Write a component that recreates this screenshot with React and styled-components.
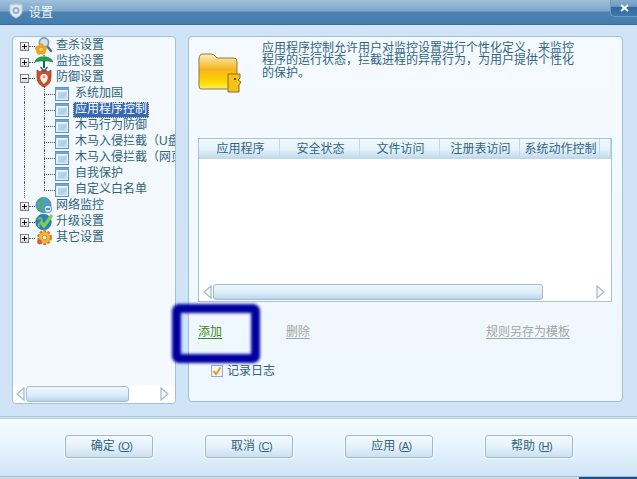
import React from "react";
import styled, { createGlobalStyle } from "styled-components";

const Global = createGlobalStyle`
  html, body { margin: 0; padding: 0; background: #cfe5f7; }
  body { font-family: "Liberation Sans", "Noto Sans CJK SC", sans-serif; font-size: 12px; color: #2f6379; }
`;

const Page = styled.div`
  position: relative;
  width: 637px;
  height: 479px;
  overflow: hidden;
  display: flex;
  flex-direction: column;
  background: #cfe5f7;
`;
const TitleBar = styled.header`
  flex: none;
  display: flex;
  align-items: center;
  gap: 5px;
  padding: 0 0 2px 8px;
  box-sizing: content-box;
  height: 22px;
  color: #f2f8fc;
  border-bottom: 1px solid #3c6d98;
  background: linear-gradient(#9fc1da 0, #7ea8cb 11px, #4d83b2 12px, #447dad 24px);
`;
const TitleText = styled.span`
  font-size: 12px;
  flex: 1;
`;
const CloseBtn = styled.button`
  width: 27px;
  height: 17px;
  align-self: flex-start;
  border: 1px solid #6f9cc0;
  border-top: 0;
  border-right: 0;
  border-radius: 0 0 0 5px;
  padding: 0;
  display: flex;
  align-items: center;
  justify-content: center;
  background: linear-gradient(#86adcc 0, #6f9abf 40%, #2f6a9e 45%, #3f78aa 100%);
`;
const Main = styled.main`
  flex: none;
  height: 392px;
  display: flex;
  gap: 12px;
  padding: 11px 14px 0 12px;
  box-sizing: border-box;
  border-bottom: 1px solid #a8c8dd;
`;
const TreePanel = styled.nav`
  width: 164px;
  height: 368px;
  box-sizing: border-box;
  border: 1px solid #a4c0d4;
  border-radius: 4px;
  background: #f3f9fe;
  display: flex;
  flex-direction: column;
  overflow: hidden;
`;
const TreeList = styled.div`
  flex: 1;
  overflow: hidden;
  padding-top: 1px;
`;
const Row = styled.div`
  position: relative;
  height: 16px;
  display: flex;
  align-items: center;
  white-space: nowrap;
  padding-left: ${(p) => (p.$child ? 31 : 7)}px;
  ${(p) =>
    p.$rail &&
    `&::before{content:"";position:absolute;left:11px;top:0;height:16px;border-left:1px dotted #555;}`}
  ${(p) =>
    p.$child &&
    `&::after{content:"";position:absolute;left:31px;top:0;height:${p.$last ? 8 : 16}px;border-left:1px dotted #555;}`}
`;
const Expander = styled.span`
  width: 9px;
  height: 9px;
  flex: none;
  box-sizing: border-box;
  border: 1px solid #7d7d7d;
  background: linear-gradient(#fff, #d8d8d8);
  position: relative;
  z-index: 1;
  &::before {
    content: "";
    position: absolute;
    left: 1px;
    right: 1px;
    top: 3px;
    height: 1px;
    background: #111;
  }
  &::after {
    content: "";
    display: ${(p) => (p.$open ? "none" : "block")};
    position: absolute;
    top: 1px;
    bottom: 1px;
    left: 3px;
    width: 1px;
    background: #111;
  }
`;
const Dots = styled.span`
  width: ${(p) => p.$w}px;
  flex: none;
  border-top: 1px dotted #555;
`;
const RootIcon = styled.span`
  width: 19px;
  height: 16px;
  flex: none;
  display: flex;
  align-items: center;
  justify-content: flex-start;
`;
const DocIcon = styled.span`
  width: 14px;
  height: 14px;
  flex: none;
  margin-right: 4px;
  display: flex;
`;
const Label = styled.span`
  padding: 0 2px;
  height: 16px;
  line-height: 15px;
  box-sizing: border-box;
  ${(p) =>
    p.$selected &&
    `background:#3468b8;color:#fff;outline:1px dotted #e8d070;outline-offset:-1px;`}
`;
const HScroll = styled.div`
  height: 18px;
  flex: none;
  display: flex;
  align-items: center;
  padding: 0 6px 0 ${(p) => p.$pad}px;
  background: #fff;
`;
const Thumb = styled.div`
  width: ${(p) => p.$w}px;
  height: 16px;
  margin-left: 1px;
  box-sizing: border-box;
  border: 1px solid #a3bccd;
  border-radius: 3px;
  background: linear-gradient(#eef7fd, #dcedfa 55%, #b9d6ee);
`;
const Spacer = styled.div`
  flex: 1;
`;
const ContentPanel = styled.section`
  width: 435px;
  height: 366px;
  box-sizing: border-box;
  border: 1px solid #a4c0d4;
  border-radius: 4px;
  background: linear-gradient(#f4faff, #eff7ff);
  padding-left: 9px;
  display: flex;
  flex-direction: column;
`;
const Intro = styled.div`
  height: 101px;
  flex: none;
  display: flex;
  box-sizing: border-box;
`;
const FolderWrap = styled.div`
  width: 64px;
  flex: none;
  padding-top: 16px;
`;
const IntroText = styled.p`
  width: 318px;
  margin: 5px 0 0;
  line-height: 12.3px;
  font-size: 12px;
  color: #2f657f;
`;
const Table = styled.div`
  width: 414px;
  height: 164px;
  flex: none;
  box-sizing: border-box;
  border: 1px solid #a7c3d6;
  background: #fff;
  display: flex;
  flex-direction: column;
`;
const HeaderRow = styled.div`
  height: 20px;
  flex: none;
  padding-left: 1px;
  display: grid;
  grid-template-columns: repeat(5, 80px) 1fr;
  background: linear-gradient(#f1f8fd, #e4f1fa 55%, #bcd7ea);
`;
const HeaderCell = styled.div`
  display: flex;
  align-items: center;
  justify-content: center;
  box-sizing: border-box;
  padding: 0 0 3px 2px;
  border-right: 1px solid #c0d8e8;
  color: #2f657f;
  white-space: nowrap;
`;
const TableBody = styled.div`
  flex: 1;
`;
const Links = styled.div`
  margin-top: 23px;
  height: 16px;
  flex: none;
  display: grid;
  grid-template-columns: 88px 200px auto;
`;
const ActionLink = styled.a`
  justify-self: start;
  color: ${(p) => (p.$disabled ? "#a3a69c" : "#3f8a12")};
  text-decoration: underline;
  text-underline-offset: 2px;
  line-height: 15px;
`;
const CheckRow = styled.label`
  margin-top: 22px;
  margin-left: 13px;
  display: flex;
  align-items: center;
  gap: 4px;
  height: 13px;
`;
const Check = styled.span`
  width: 12px;
  height: 12px;
  margin-top: 2px;
  box-sizing: border-box;
  border: 1px solid #8fb0c8;
  background: #eef6fc;
  display: flex;
`;
const Footer = styled.footer`
  height: 59px;
  flex: none;
  margin-top: 1px;
  display: flex;
  align-items: flex-start;
  gap: 52px;
  padding: 16px 0 0 65px;
  box-sizing: border-box;
  border-top: 1px solid #b4d0e4;
  border-bottom: 1px solid #a6bccd;
  background: linear-gradient(#f6fbff, #e8f4fd 45%, #cfe4f6);
`;
const Btn = styled.button`
  width: 88px;
  height: 23px;
  box-sizing: border-box;
  border: 1px solid #a0b9ca;
  border-radius: 3px;
  padding: 0 0 4px 5px;
  font: inherit;
  color: #2f6379;
  background: linear-gradient(#f4fafe, #e6f2fb 50%, #c9e0f3);
  box-shadow: 0 0 0 1px #f4fafe;
`;
const KeyHint = styled.span`
  font-size: 11px;
  letter-spacing: -0.5px;
`;
const BottomEdge = styled.div`
  flex: 1;
  background: #cfd9e2;
  display: flex;
  justify-content: flex-end;
`;
const EdgeDark = styled.div`
  width: 58px;
  background: #1f4f86;
`;
const Annotation = styled.div`
  position: absolute;
  left: 172px;
  top: 304px;
  width: 88px;
  height: 59px;
  box-sizing: border-box;
  border: 9px solid #00009e;
  border-radius: 7px;
  filter: blur(1.5px);
  pointer-events: none;
`;

const Doc = () => (
  <svg width="14" height="14" viewBox="0 0 14 14">
    <rect x="0.5" y="0.5" width="13" height="13" fill="#e4f0fa" stroke="#5d93bd" />
    <rect x="1" y="1" width="12" height="2" fill="#6ea6d2" />
    <path d="M3 6h8M3 8h8M3 10h6" stroke="#8db9dc" />
    <path d="M2 12 L12 4 V12Z" fill="#a9cce8" opacity=".6" />
  </svg>
);
const iconSize = { width: 18, height: 18, viewBox: "0 0 18 18", style: { overflow: "visible" } };
const Scan = () => (
  <svg {...iconSize}>
    <path d="M12 9l4 5" stroke="#4d6f8c" strokeWidth="2.4" strokeLinecap="round" />
    <circle cx="9" cy="5.5" r="4.6" fill="#cfe3ee" stroke="#7d98ad" strokeWidth="1.6" />
    <g fill="#f2a91e" stroke="#d98710" strokeWidth=".5">
      <circle cx="6" cy="9" r="2.4" />
      <circle cx="2.8" cy="11.5" r="2.4" />
      <circle cx="9" cy="11.5" r="2.4" />
      <circle cx="4" cy="15" r="2.4" />
      <circle cx="8" cy="15" r="2.4" />
    </g>
    <circle cx="6" cy="12.3" r="1.6" fill="#fbe08a" />
  </svg>
);
const Umbrella = () => (
  <svg {...iconSize}>
    <path d="M0 9 C1 2 16 2 18 9 C15 7.5 3 7.5 0 9Z" fill="#22a24a" stroke="#12793a" strokeWidth=".6" />
    <path d="M9 2v1" stroke="#12793a" strokeWidth="1.2" />
    <path d="M9 8v7" stroke="#1f5f66" strokeWidth="2" />
    <path d="M5.5 14 L9 18 L12.5 14" fill="none" stroke="#1f5f66" strokeWidth="1.2" />
  </svg>
);
const Shield = () => (
  <svg {...iconSize}>
    <path d="M2 1 L5 3 L7 1 L9 3 L11 1 L13 3 L16 1 L16 8 C16 14 12 17 9 18 C6 17 2 14 2 8Z" fill="#c8502c" stroke="#96331a" strokeWidth=".7" />
    <path d="M9 5c3 0 4 2 3.6 4.5S10.5 13.5 9 15c-1.5-1.5-3.2-3-3.6-5.5S6 5 9 5z" fill="#fdf3e6" />
    <circle cx="9" cy="8" r="1.4" fill="#e4907a" />
  </svg>
);
const Globe = () => (
  <svg {...iconSize}>
    <circle cx="8.5" cy="8" r="7.5" fill="#4a9ed8" stroke="#2a6ea6" strokeWidth=".7" />
    <path d="M4 4c3-2 5 0 4 2S4 7 4 10s3 2 3 4" fill="none" stroke="#59ad46" strokeWidth="2.2" />
    <circle cx="13" cy="12" r="3.8" fill="#d8e8f2" stroke="#3a6f9a" strokeWidth=".7" />
    <path d="M11 12h4" stroke="#2f6f9f" strokeWidth="1.4" />
  </svg>
);
const Upgrade = () => (
  <svg {...iconSize}>
    <circle cx="8.5" cy="9" r="7.8" fill="#2b82bd" stroke="#1c6a97" strokeWidth=".7" />
    <path d="M3 6c3-2 5 0 3 3s-3 2-2 5" fill="none" stroke="#74bf4e" strokeWidth="2" />
    <path d="M6 9l3 4 8-11" fill="none" stroke="#84cc55" strokeWidth="3.2" />
  </svg>
);
const Gear = () => (
  <svg {...iconSize}>
    <circle cx="9.5" cy="8.5" r="6" fill="#f0a530" stroke="#d97f17" strokeWidth="3" strokeDasharray="2.6 1.2" />
    <circle cx="9.5" cy="8.5" r="5.5" fill="#f4b23e" />
    <circle cx="9.5" cy="8.5" r="2.2" fill="#fff3d4" stroke="#b9640f" strokeWidth=".6" />
    <circle cx="4.5" cy="13" r="2.4" fill="#d9622a" />
  </svg>
);
const Folder = () => (
  <svg width="46" height="40" viewBox="0 0 46 40">
    <defs>
      <linearGradient id="fold" x1="0" y1="0" x2="0" y2="1">
        <stop offset="0" stopColor="#fbeebc" />
        <stop offset=".45" stopColor="#f6b41c" />
        <stop offset=".8" stopColor="#ffd800" />
        <stop offset="1" stopColor="#ffee60" />
      </linearGradient>
    </defs>
    <path d="M1 6 Q1 1 5 1 H13 Q16 1 18 4 L19 5 H36 Q39 5 39 9 V33 Q39 36 36 36 H3 Q1 36 1 33Z" fill="url(#fold)" stroke="#8d7a42" />
    <path d="M30 21 H42 V25 L40 27 L43 29 L41 32 V39 H30Z" fill="#f5c21a" stroke="#8a6c18" />
    <rect x="36" y="25" width="2" height="2" fill="#6a4a10" />
  </svg>
);
const Arrow = ({ dir }) => (
  <svg width="9" height="14" viewBox="0 0 9 14">
    <path d={dir === "l" ? "M8 1 L1 7 L8 13Z" : "M1 1 L8 7 L1 13Z"} fill="#f3f8fb" stroke="#a3b8c6" strokeWidth="1.2" />
  </svg>
);

const children = [
  "系统加固",
  "应用程序控制",
  "木马行为防御",
  "木马入侵拦截（U盘拦截）",
  "木马入侵拦截（网页拦截）",
  "自我保护",
  "自定义白名单",
];
const cols = ["应用程序", "安全状态", "文件访问", "注册表访问", "系统动作控制"];

export default function App() {
  return (
    <Page>
      <Global />
      <TitleBar>
        <svg width="16" height="16" viewBox="0 0 16 16">
          <path d="M2 2 Q8 0 14 2 V9 Q13 13 8 15 Q3 13 2 9Z" fill="#dfe9f0" stroke="#b4cadb" />
          <circle cx="8" cy="7.5" r="3.5" fill="#8fb0c9" />
          <circle cx="8" cy="7.5" r="1.5" fill="#eef5fa" />
        </svg>
        <TitleText>设置</TitleText>
        <CloseBtn aria-label="关闭">
          <svg width="9" height="8" viewBox="0 0 9 8">
            <path d="M1 1 L8 7 M8 1 L1 7" stroke="#fff" strokeWidth="2" />
          </svg>
        </CloseBtn>
      </TitleBar>
      <Main>
        <TreePanel>
          <TreeList>
            <Row>
              <Expander />
              <Dots $w={6} />
              <RootIcon><Scan /></RootIcon>
              <Label>查杀设置</Label>
            </Row>
            <Row>
              <Expander />
              <Dots $w={6} />
              <RootIcon><Umbrella /></RootIcon>
              <Label>监控设置</Label>
            </Row>
            <Row>
              <Expander $open />
              <Dots $w={6} />
              <RootIcon><Shield /></RootIcon>
              <Label>防御设置</Label>
            </Row>
            {children.map((c, i) => (
              <Row key={c} $child $rail $last={i === children.length - 1}>
                <Dots $w={11} />
                <DocIcon><Doc /></DocIcon>
                <Label $selected={i === 1}>{c}</Label>
              </Row>
            ))}
            <Row>
              <Expander />
              <Dots $w={6} />
              <RootIcon><Globe /></RootIcon>
              <Label>网络监控</Label>
            </Row>
            <Row>
              <Expander />
              <Dots $w={6} />
              <RootIcon><Upgrade /></RootIcon>
              <Label>升级设置</Label>
            </Row>
            <Row>
              <Expander />
              <Dots $w={6} />
              <RootIcon><Gear /></RootIcon>
              <Label>其它设置</Label>
            </Row>
          </TreeList>
          <HScroll $pad={3}>
            <Arrow dir="l" />
            <Thumb $w={103} />
            <Spacer />
            <Arrow dir="r" />
          </HScroll>
        </TreePanel>
        <ContentPanel>
          <Intro>
            <FolderWrap><Folder /></FolderWrap>
            <IntroText>
              应用程序控制允许用户对监控设置进行个性化定义，来监控程序的运行状态，拦截进程的异常行为，为用户提供个性化的保护。
            </IntroText>
          </Intro>
          <Table>
            <HeaderRow>
              {cols.map((c) => (
                <HeaderCell key={c}>{c}</HeaderCell>
              ))}
              <HeaderCell />
            </HeaderRow>
            <TableBody />
            <HScroll $pad={4}>
              <Arrow dir="l" />
              <Thumb $w={330} />
              <Spacer />
              <Arrow dir="r" />
            </HScroll>
          </Table>
          <Links>
            <ActionLink>添加</ActionLink>
            <ActionLink $disabled>删除</ActionLink>
            <ActionLink $disabled>规则另存为模板</ActionLink>
          </Links>
          <CheckRow>
            <Check>
              <svg width="10" height="10" viewBox="0 0 10 10">
                <path d="M1.5 5 L4 8 L8.5 1.5" fill="none" stroke="#ee9a1c" strokeWidth="2" />
              </svg>
            </Check>
            记录日志
          </CheckRow>
        </ContentPanel>
      </Main>
      <Footer>
        <Btn>确定 <KeyHint>(<u>O</u>)</KeyHint></Btn>
        <Btn>取消 <KeyHint>(<u>C</u>)</KeyHint></Btn>
        <Btn>应用 <KeyHint>(<u>A</u>)</KeyHint></Btn>
        <Btn>帮助 <KeyHint>(<u>H</u>)</KeyHint></Btn>
      </Footer>
      <BottomEdge><EdgeDark /></BottomEdge>
      <Annotation />
    </Page>
  );
}
